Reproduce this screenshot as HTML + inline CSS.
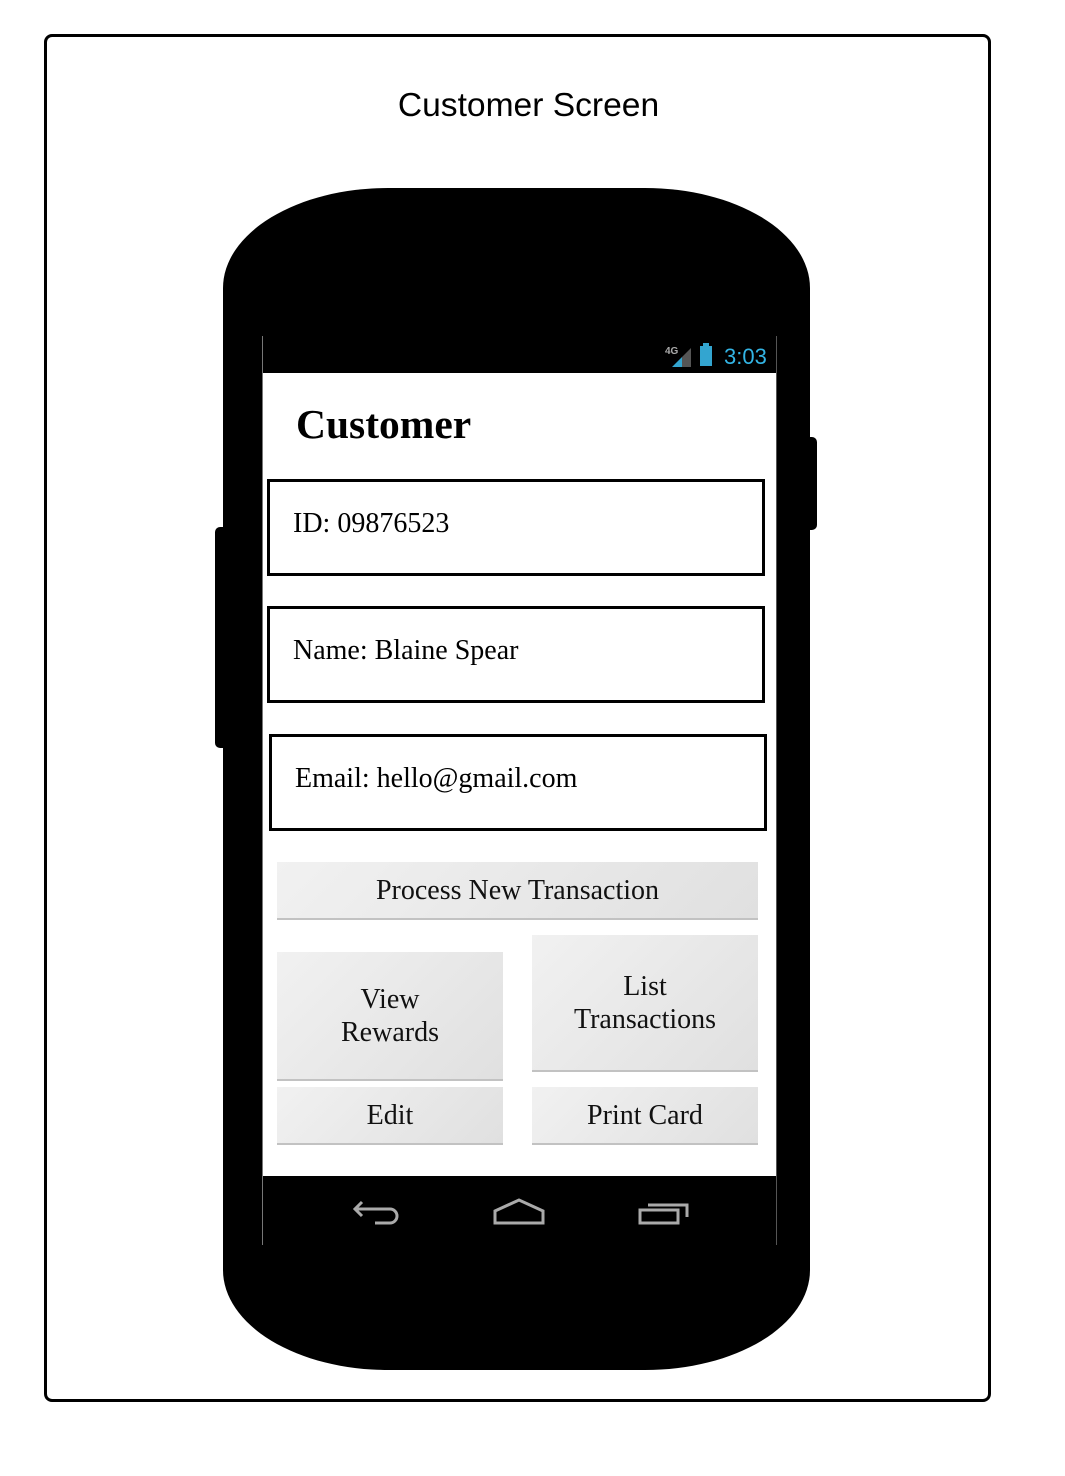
<!DOCTYPE html>
<html><head><style>
*{margin:0;padding:0;box-sizing:border-box}
body{width:1065px;height:1476px;background:#fff;position:relative;overflow:hidden;font-family:"Liberation Serif",serif}
.a{position:absolute}
.frame{left:44px;top:34px;width:947px;height:1368px;border:3px solid #000;border-radius:8px}
.title{left:0;width:1057px;top:87px;text-align:center;font:33.6px "Liberation Sans",sans-serif}
.phone{left:223px;top:188px;width:587px;height:1182px;background:#000;border-radius:165px/100px}
.btnside{background:#000;border-radius:5px}
.field{border:3px solid #000;font-size:28px;padding-left:23px;padding-bottom:8px;display:flex;align-items:center;background:#fff}
.btn{background:linear-gradient(135deg,#f1f1f1,#e0e0e0);border-bottom:2px solid #c2c2c2;font-size:28px;display:flex;align-items:center;justify-content:center;text-align:center;line-height:33px;color:#111}
</style></head><body>
<div class="a frame"></div>
<div class="a title">Customer Screen</div>
<div class="a btnside" style="left:215px;top:527px;width:14px;height:221px"></div>
<div class="a btnside" style="left:804px;top:437px;width:13px;height:93px"></div>
<div class="a phone"></div>
<div class="a" style="left:262px;top:336px;width:1px;height:909px;background:#777"></div>
<div class="a" style="left:776px;top:336px;width:1px;height:909px;background:#555"></div>
<div class="a" style="left:263px;top:373px;width:513px;height:803px;background:#fff"></div>
<svg class="a" style="left:660px;top:340px" width="120" height="30">
<text x="5" y="14" font-family="Liberation Sans" font-size="10" font-weight="bold" fill="#aaa">4G</text>
<polygon points="12,27 22,17 22,27" fill="#33a5d0"/>
<polygon points="22,17 31,8 31,27 22,27" fill="#555"/>
<rect x="40" y="6" width="12" height="20" fill="#33a5d0"/><rect x="43" y="3" width="6" height="3" fill="#33a5d0"/>
<text x="64" y="24" font-family="Liberation Sans" font-size="22" fill="#33b5e5">3:03</text>
</svg>
<div class="a" style="left:296px;top:400px;font-size:41.5px;font-weight:bold">Customer</div>
<div class="a field" style="left:267px;top:479px;width:498px;height:97px">ID: 09876523</div>
<div class="a field" style="left:267px;top:606px;width:498px;height:97px">Name: Blaine Spear</div>
<div class="a field" style="left:269px;top:734px;width:498px;height:97px">Email: hello@gmail.com</div>
<div class="a btn" style="left:277px;top:862px;width:481px;height:58px">Process New Transaction</div>
<div class="a btn" style="left:277px;top:952px;width:226px;height:129px">View<br>Rewards</div>
<div class="a btn" style="left:532px;top:935px;width:226px;height:137px">List<br>Transactions</div>
<div class="a btn" style="left:277px;top:1087px;width:226px;height:58px">Edit</div>
<div class="a btn" style="left:532px;top:1087px;width:226px;height:58px">Print Card</div>
<svg class="a" style="left:330px;top:1180px" width="380" height="70" fill="none" stroke="#aaa" stroke-width="3">
<path d="M32 22 L25 29 L32 36 M25 29 H60 A7 7 0 0 1 60 43 H45"/>
<path d="M165 43 V31 L189 20 L213 31 V43 Z"/>
<path d="M310 43 V30 H348 V43 Z M318 25 H357 V37"/>
</svg>
</body></html>
